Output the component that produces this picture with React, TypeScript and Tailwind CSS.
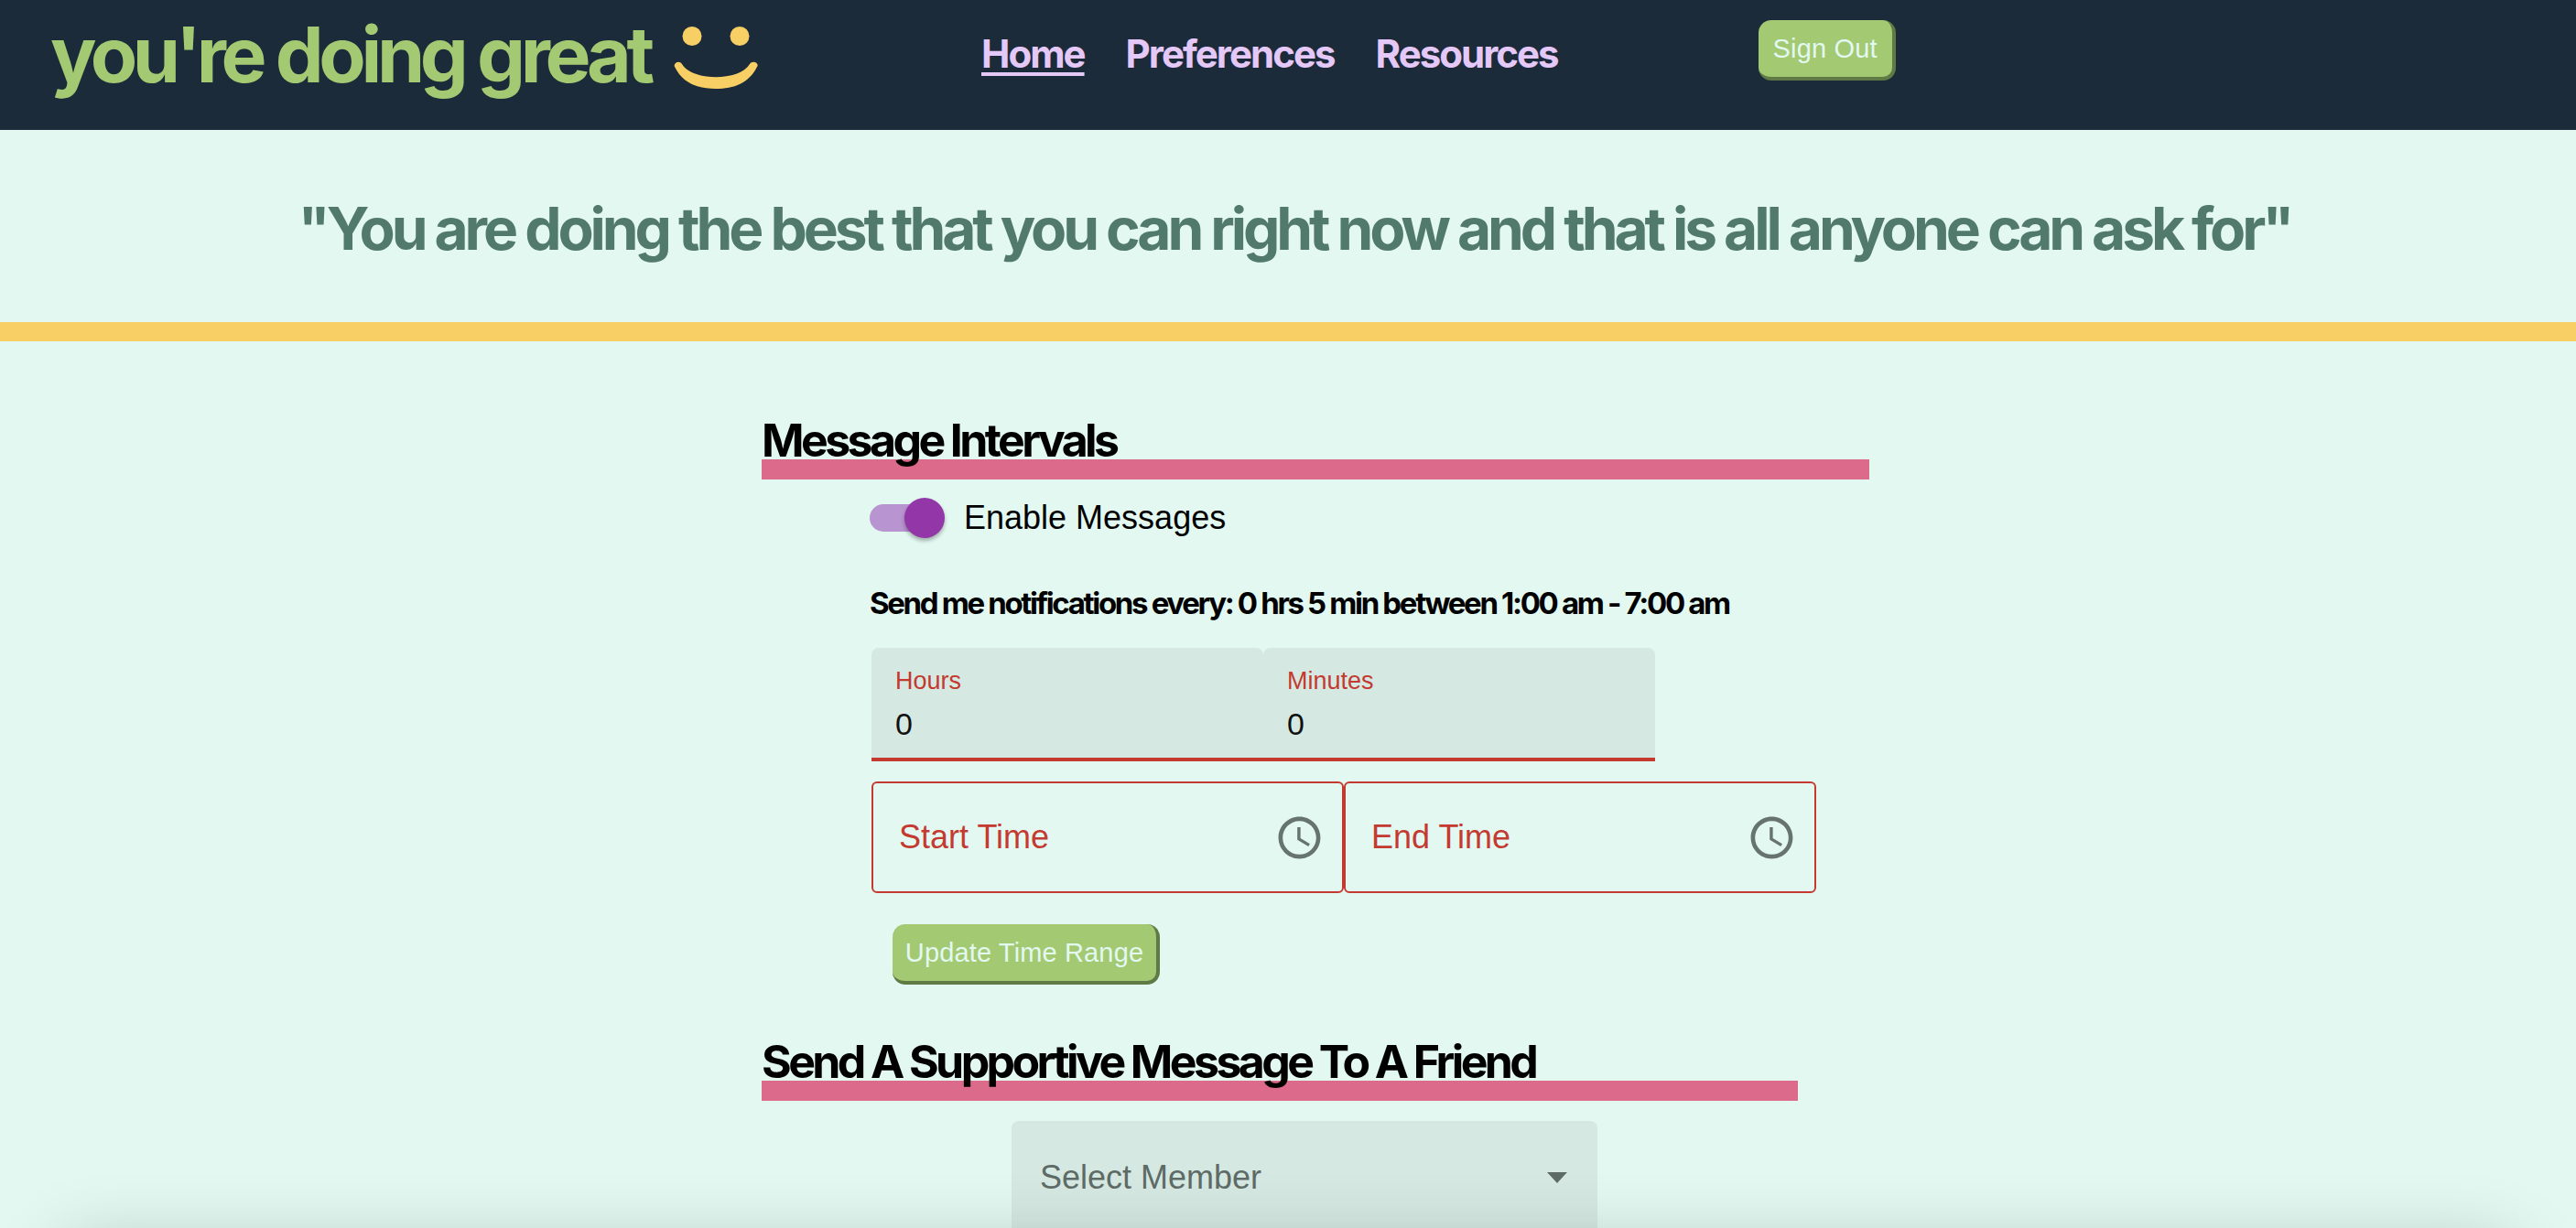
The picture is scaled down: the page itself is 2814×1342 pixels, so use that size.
import React from 'react';

const inter = "font-['Inter',sans-serif]";
const arial = "font-['Liberation_Sans',Arial,sans-serif]";

function Smile() {
  return (
    <svg width="94" height="72" viewBox="0 0 94 72" className="ml-[26px] mt-[29px] shrink-0">
      <ellipse cx="20" cy="10.5" rx="10.5" ry="10.5" fill="#f7cf65" />
      <ellipse cx="72" cy="10.5" rx="10.5" ry="10.5" fill="#f7cf65" />
      <path d="M1 44 C-1 40 6 36 9 41 C20 60 72 60 83 41 C86 36 94 40 91 44 C82 62 66 68 46 68 C26 68 10 62 1 44 Z" fill="#f7cf65" />
    </svg>
  );
}

function Clock() {
  return (
    <svg width="55" height="55" viewBox="0 0 24 24" fill="#66736f" className="shrink-0">
      <path d="M11.99 2C6.47 2 2 6.48 2 12s4.47 10 9.99 10C17.52 22 22 17.52 22 12S17.52 2 11.99 2zM12 20c-4.42 0-8-3.58-8-8s3.58-8 8-8 8 3.58 8 8-3.58 8-8 8zm.5-13H11v6l5.25 3.15.75-1.23-4.5-2.67z" />
    </svg>
  );
}

function SectionHeading({ title, width }: { title: string; width: string }) {
  return (
    <h2 className={`${inter} ${width} h-[72px] border-b-[22px] border-[#dc6b8b] text-[50px] leading-[58px] font-bold tracking-[-0.072em] text-black`}>
      {title}
    </h2>
  );
}

function GreenButton({ label, className }: { label: string; className: string }) {
  return (
    <button className={`${arial} ${className} rounded-[14px] border-r-[4px] border-b-[4px] border-[#5f7a45] bg-[#a3c972] pt-[2px] text-[29px] tracking-[0.005em] text-[#e2f8f0]`}>
      {label}
    </button>
  );
}

function NumberField({ label }: { label: string }) {
  return (
    <div className={`${arial} h-[124px] w-[428px] rounded-t-[8px] border-b-4 border-[#c43a30] bg-[#d5e9e2] pl-[26px]`}>
      <div className="pt-[18px] text-[27px] leading-[36px] text-[#c43a30]">{label}</div>
      <div className="mt-[9px] text-[34px] leading-[40px] text-[#111]">0</div>
    </div>
  );
}

function TimeField({ label }: { label: string }) {
  return (
    <div className="flex h-[122px] w-[516px] items-center justify-between rounded-[6px] border-2 border-[#c43a30] pr-[19px] pl-[28px]">
      <span className={`${arial} text-[36px] text-[#c43a30]`}>{label}</span>
      <Clock />
    </div>
  );
}

export default function App() {
  return (
    <div className="relative h-screen overflow-hidden bg-[#e2f8f0]">
      <header className="flex h-[142px] items-start bg-[#1c2b39] pl-[55px]">
        <div className="flex w-[1017px] shrink-0">
          <h1 className={`${inter} text-[84px] leading-[120px] font-bold tracking-[-0.064em] text-[#a3c972]`}>you're doing great</h1>
          <Smile />
        </div>
        <nav className={`${inter} flex gap-[45px] pt-[31px] text-[42px] leading-[56px] font-bold tracking-[-0.047em] text-[#e4c8f8]`}>
          <a className="underline decoration-[4px] underline-offset-[5px]">Home</a>
          <a>Preferences</a>
          <a>Resources</a>
        </nav>
        <GreenButton label="Sign Out" className="mt-[22px] ml-[219px] h-[66px] w-[150px]" />
      </header>

      <section className="flex h-[210px] items-center justify-center pt-[6px] pl-[14px]">
        <p className={`${inter} text-[64px] font-bold tracking-[-0.0637em] text-[#527a6c]`}>
          "You are doing the best that you can right now and that is all anyone can ask for"
        </p>
      </section>
      <div className="h-[21px] bg-[#f7cf65]" />

      <main className="ml-[832px] pt-[79px]">
        <SectionHeading title="Message Intervals" width="w-[1210px]" />

        <div className="ml-[118px]">
          <div className="mt-[20px] flex h-[44px] items-center">
            <div className="relative h-[30px] w-[70px] rounded-full bg-[#b894d0]">
              <div className="absolute top-[-7px] right-[-12px] h-[44px] w-[44px] rounded-full bg-[#9236a8] shadow-[0_3px_4px_rgba(0,0,0,0.3)]" />
            </div>
            <span className={`${arial} ml-[33px] text-[36px] text-black`}>Enable Messages</span>
          </div>

          <p className={`${inter} mt-[47px] h-[48px] text-[33px] leading-[48px] font-bold tracking-[-0.071em] text-black`}>
            Send me notifications every: 0 hrs 5 min between 1:00 am - 7:00 am
          </p>

          <div className="mt-[25px] ml-[2px]">
            <div className="flex">
              <NumberField label="Hours" />
              <NumberField label="Minutes" />
            </div>
            <div className="mt-[22px] flex">
              <TimeField label="Start Time" />
              <TimeField label="End Time" />
            </div>
            <GreenButton label="Update Time Range" className="mt-[34px] ml-[23px] h-[66px] w-[292px]" />
          </div>
        </div>

        <div className="mt-[55px]">
          <SectionHeading title="Send A Supportive Message To A Friend" width="w-[1132px]" />
        </div>

        <div className={`${arial} mt-[22px] ml-[273px] flex h-[160px] w-[640px] items-center justify-between rounded-t-[8px] bg-[#d5e9e2] pr-[33px] pb-[36px] pl-[31px] text-[36px] text-[#5f6b67]`}>
          <span>Select Member</span>
          <svg width="22" height="12" viewBox="0 0 22 12" fill="#5f6b67"><path d="M0 0h22L11 12z" /></svg>
        </div>
      </main>

      <div className="absolute top-[1362px] right-[70px] left-[70px] h-[100px] shadow-[0_0_80px_rgba(0,0,0,0.22)]" />
    </div>
  );
}
